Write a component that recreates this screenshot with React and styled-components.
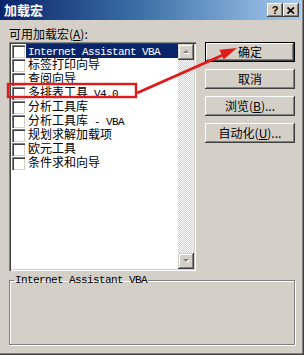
import styled, { createGlobalStyle } from 'styled-components';

const GlobalStyle = createGlobalStyle`
  body {
    margin: 0;
    background: #d4d0c8;
  }
`;

const cjk = `"Noto Sans CJK SC", "Noto Sans", sans-serif`;
const mono = `"Liberation Mono", "DejaVu Sans Mono", monospace`;

const Window = styled.div`
  position: relative;
  width: 304px;
  height: 355px;
  box-sizing: border-box;
  padding: 0 3px 2px 0;
  background: #d4d0c8;
  box-shadow: inset -1px -1px #404040, inset -2px -2px #808080;
  font-family: ${cjk};
  font-size: 12px;
  color: #000;
  display: flex;
  flex-direction: column;
`;

const TitleBar = styled.div`
  height: 20px;
  display: flex;
  align-items: center;
  padding: 0 2px 0 4px;
  background: linear-gradient(to right, #0a246a 0%, #3a6ea5 45%, #a6caf0 100%);
`;

const Title = styled.div`
  flex: 1;
  color: #fff;
  font-weight: bold;
  font-size: 13px;
  line-height: 20px;
`;

const CaptionButton = styled.div`
  width: 16px;
  height: 14px;
  box-sizing: border-box;
  background: #d4d0c8;
  box-shadow: inset -1px -1px #404040, inset 1px 1px #fff, inset -2px -2px #808080;
  display: flex;
  align-items: center;
  justify-content: center;
  font-family: "Liberation Sans", Arial, sans-serif;
  font-weight: bold;
  font-size: 11px;
  line-height: 14px;
`;

const Body = styled.div`
  padding: 7px 6px 0 9px;
  display: flex;
  flex-direction: column;
`;

const TopRow = styled.div`
  display: flex;
  gap: 9px;
`;

const LeftColumn = styled.div`
  width: 187px;
  display: flex;
  flex-direction: column;
`;

const Label = styled.div`
  height: 13px;
  line-height: 13px;
  margin-bottom: 2px;
  white-space: nowrap;
`;

const ListBox = styled.div`
  height: 229px;
  box-sizing: border-box;
  display: flex;
  background: #fff;
  box-shadow: inset 1px 1px #808080, inset 2px 2px #404040, inset -1px -1px #fff,
    inset -2px -2px #d4d0c8;
  padding: 2px;
`;

const Items = styled.div`
  flex: 1;
  display: flex;
  flex-direction: column;
`;

const Row = styled.div`
  height: 14px;
  display: flex;
  align-items: center;
  padding-left: 1px;
`;

const CheckBox = styled.div`
  width: 13px;
  height: 13px;
  box-sizing: border-box;
  background: #fff;
  box-shadow: inset 1px 1px #808080, inset 2px 2px #404040, inset -1px -1px #d4d0c8;
  margin-right: 1px;
  flex: none;
`;

const ItemText = styled.div`
  flex: 1;
  height: 14px;
  box-sizing: border-box;
  line-height: 11px;
  padding: 0 0 3px 2px;
  white-space: nowrap;
  background: ${p => (p.$selected ? '#0a246a' : 'transparent')};
  color: ${p => (p.$selected ? '#fff' : '#000')};
`;

const Latin = styled.span`
  font-family: ${mono};
  font-size: 11px;
  letter-spacing: -0.6px;
`;

const ScrollBar = styled.div`
  width: 16px;
  display: flex;
  flex-direction: column;
  background-color: #fff;
  background-image: conic-gradient(#d4d0c8 25%, #fff 0 50%, #d4d0c8 0 75%, #fff 0);
  background-size: 2px 2px;
`;

const ScrollTrack = styled.div`
  flex: 1;
`;

const ArrowButton = styled.div`
  width: 16px;
  height: 16px;
  box-sizing: border-box;
  background: #d4d0c8;
  box-shadow: inset -1px -1px #404040, inset 1px 1px #d4d0c8, inset -2px -2px #808080,
    inset 2px 2px #fff;
  display: flex;
  align-items: center;
  justify-content: center;
`;

const ButtonColumn = styled.div`
  width: 90px;
  padding-top: 15px;
  display: flex;
  flex-direction: column;
  gap: 7px;
`;

const Button = styled.div`
  height: 20px;
  box-sizing: border-box;
  background: #d4d0c8;
  display: flex;
  align-items: center;
  justify-content: center;
  line-height: 14px;
  white-space: nowrap;
  box-shadow: ${p =>
    p.$default
      ? 'inset 0 0 0 1px #000, inset -2px -2px #404040, inset 2px 2px #fff, inset -3px -3px #808080'
      : 'inset -1px -1px #404040, inset 1px 1px #fff, inset -2px -2px #808080'};
`;

const GroupBox = styled.fieldset`
  margin: 3px 0 0 0;
  padding: 0;
  height: 71px;
  box-sizing: border-box;
  border: 1px solid #808080;
  box-shadow: inset 1px 1px #fff, 1px 1px #fff;
  min-width: 0;
`;

const GroupLegend = styled.legend`
  margin-left: 4px;
  padding: 0 1px;
  font-family: ${mono};
  font-size: 11px;
  letter-spacing: -0.6px;
  line-height: 12px;
`;

const Overlay = styled.svg`
  position: absolute;
  left: 0;
  top: 0;
  pointer-events: none;
`;

const items = [
  { cn: '', en: 'Internet Assistant VBA', selected: true },
  { cn: '标签打印向导' },
  { cn: '查阅向导' },
  { cn: '多排表工具', en: ' V4.0' },
  { cn: '分析工具库' },
  { cn: '分析工具库', en: ' - VBA' },
  { cn: '规划求解加载项' },
  { cn: '欧元工具' },
  { cn: '条件求和向导' },
];

const Triangle = ({ up }) => (
  <svg width="9" height="6" viewBox="0 0 9 6">
    {up ? (
      <>
        <polygon points="2,5 5,2 8,5" fill="#fff" />
        <polygon points="1,4 4,1 7,4" fill="#808080" />
      </>
    ) : (
      <>
        <polygon points="2,2 8,2 5,5" fill="#fff" />
        <polygon points="1,1 7,1 4,4" fill="#808080" />
      </>
    )}
  </svg>
);

const App = () => {
  return (
    <>
      <GlobalStyle />
      <Window>
        <TitleBar>
          <Title>加载宏</Title>
          <CaptionButton>?</CaptionButton>
          <CaptionButton>
            <svg width="8" height="7" viewBox="0 0 8 7">
              <path d="M0.5 0.5 L7 6.5 M7 0.5 L0.5 6.5" stroke="#000" strokeWidth="1.7" />
            </svg>
          </CaptionButton>
        </TitleBar>
        <Body>
          <TopRow>
            <LeftColumn>
              <Label>
                可用加载宏(<u>A</u>):
              </Label>
              <ListBox>
                <Items>
                  {items.map((it, i) => (
                    <Row key={i}>
                      <CheckBox />
                      <ItemText $selected={it.selected}>
                        {it.cn}
                        {it.en && <Latin>{it.en}</Latin>}
                      </ItemText>
                    </Row>
                  ))}
                </Items>
                <ScrollBar>
                  <ArrowButton>
                    <Triangle up />
                  </ArrowButton>
                  <ScrollTrack />
                  <ArrowButton>
                    <Triangle />
                  </ArrowButton>
                </ScrollBar>
              </ListBox>
            </LeftColumn>
            <ButtonColumn>
              <Button $default>确定</Button>
              <Button>取消</Button>
              <Button>
                浏览(<u>B</u>)...
              </Button>
              <Button>
                自动化(<u>U</u>)...
              </Button>
            </ButtonColumn>
          </TopRow>
          <GroupBox>
            <GroupLegend>Internet Assistant VBA</GroupLegend>
          </GroupBox>
        </Body>
        <Overlay width="304" height="355" viewBox="0 0 304 355">
          <rect x="8" y="84" width="128" height="13" fill="none" stroke="#e11b1b" strokeWidth="2.4" />
          <line x1="137" y1="93" x2="224" y2="54.5" stroke="#e11b1b" strokeWidth="3" />
          <polygon points="237,48 223.6,59.4 219.4,49.8" fill="#e11b1b" />
        </Overlay>
      </Window>
    </>
  );
};

export default App;
